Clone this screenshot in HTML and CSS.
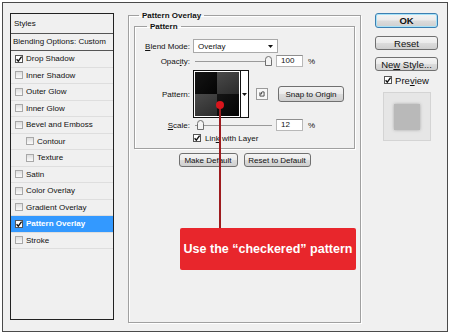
FILE: index.html
```html
<!DOCTYPE html>
<html lang="en">

<head>
    <title>Layer Style - Pattern Overlay</title>
    <link rel="stylesheet" href="styles.css">
</head>

<body>
    <div class="dialog">
        <!-- style list on the left -->
        <div class="styles-list">
            <div class="list-head">Styles</div>
            <div class="list-blend">Blending Options: Custom</div>
            <div class="list-row"><span class="check on"><svg viewBox="0 0 8 8"><path d="M1.6 4.2 L3.3 6.1 L6.6 1.6" /></svg></span>Drop Shadow</div>
            <div class="list-row"><span class="check"></span>Inner Shadow</div>
            <div class="list-row"><span class="check"></span>Outer Glow</div>
            <div class="list-row"><span class="check"></span>Inner Glow</div>
            <div class="list-row"><span class="check"></span>Bevel and Emboss</div>
            <div class="list-row sub"><span class="check"></span>Contour</div>
            <div class="list-row sub"><span class="check"></span>Texture</div>
            <div class="list-row"><span class="check"></span>Satin</div>
            <div class="list-row"><span class="check"></span>Color Overlay</div>
            <div class="list-row"><span class="check"></span>Gradient Overlay</div>
            <div class="list-row selected"><span class="check on"><svg viewBox="0 0 8 8"><path d="M1.6 4.2 L3.3 6.1 L6.6 1.6" /></svg></span>Pattern Overlay</div>
            <div class="list-row"><span class="check"></span>Stroke</div>
        </div>

        <!-- settings -->
        <fieldset class="group">
            <legend>Pattern Overlay</legend>
            <fieldset class="group inner">
                <legend>Pattern</legend>
                <div class="form-row row-blend">
                    <span class="field-label"><u>B</u>lend Mode:</span>
                    <div class="select">Overlay<svg class="caret" viewBox="0 0 5 3"><path d="M0 0 H5 L2.5 3 Z" /></svg></div>
                </div>
                <div class="form-row">
                    <span class="field-label">Opac<u>i</u>ty:</span>
                    <div class="slider"><svg class="thumb" style="margin-left: 70px" viewBox="0 0 7 10"><path d="M0.5 9.5 V3.5 Q0.5 0.5 3.5 0.5 Q6.5 0.5 6.5 3.5 V9.5 Z" /></svg></div>
                    <div class="num">100</div>
                    <span class="unit">%</span>
                </div>
                <div class="form-row row-pattern">
                    <span class="field-label">Pattern:</span>
                    <div class="swatch">
                        <div class="tile">
                            <span class="sq dark"></span><span class="sq grey"></span>
                            <span class="sq grey"></span><span class="sq dark"></span>
                        </div>
                        <div class="swatch-arrow"><svg class="caret" viewBox="0 0 5 3"><path d="M0 0 H5 L2.5 3 Z" /></svg></div>
                    </div>
                    <div class="icon-btn"><svg viewBox="0 0 12 12"><path d="M3.5 4 V8.5 H8.5 V3.5 H6 M5.5 3.5 V6 H3.5" /></svg></div>
                    <button class="btn btn-snap">Snap to Origin</button>
                </div>
                <div class="form-row">
                    <span class="field-label"><u>S</u>cale:</span>
                    <div class="slider"><svg class="thumb" style="margin-left: 2px" viewBox="0 0 7 10"><path d="M0.5 9.5 V3.5 Q0.5 0.5 3.5 0.5 Q6.5 0.5 6.5 3.5 V9.5 Z" /></svg></div>
                    <div class="num">12</div>
                    <span class="unit">%</span>
                </div>
                <div class="form-row row-link">
                    <span class="field-label"></span>
                    <span class="check on"><svg viewBox="0 0 8 8"><path d="M1.6 4.2 L3.3 6.1 L6.6 1.6" /></svg></span>
                    <span>Lin<u>k</u> with Layer</span>
                </div>
            </fieldset>
            <div class="defaults">
                <button class="btn btn-make">Make Default</button>
                <button class="btn btn-reset-def">Reset to Default</button>
            </div>
        </fieldset>

        <!-- buttons on the right -->
        <div class="side">
            <button class="btn side-btn btn-ok">OK</button>
            <button class="btn side-btn btn-reset">Reset</button>
            <button class="btn side-btn btn-new">Ne<u>w</u> Style...</button>
            <div class="preview-row">
                <span class="check on"><svg viewBox="0 0 8 8"><path d="M1.6 4.2 L3.3 6.1 L6.6 1.6" /></svg></span>
                <span>Pre<u>v</u>iew</span>
            </div>
            <div class="preview">
                <div class="preview-square"></div>
            </div>
        </div>

        <!-- tutorial annotation -->
        <div class="pointer-line"></div>
        <div class="pointer-dot"></div>
        <div class="callout">Use the “checkered” pattern</div>
    </div>
</body>

</html>
```

FILE: styles.css
```css
body {
    margin: 0;
    background: #fff;
    font-family: "Liberation Sans", Arial, sans-serif;
    font-size: 8px;
    color: #111;
}

/* dialog frame */
.dialog {
    position: relative;
    box-sizing: border-box;
    width: 446px;
    height: 330px;
    margin: 2px;
    padding: 8px 0 0 7px;
    display: flex;
    align-items: flex-start;
    border: 1px solid #4a4a4a;
    background: #f0f0f0;
}

/* left style list */
.styles-list {
    box-sizing: border-box;
    width: 104px;
    height: 307px;
    margin-top: 2px;
    border: 1px solid #222;
    background: #f0f0f0;
}

.list-head {
    height: 19px;
    line-height: 19px;
    padding-left: 3px;
    border-bottom: 1px solid #555;
}

.list-blend {
    height: 16px;
    line-height: 16px;
    padding-left: 2px;
    border-bottom: 1px solid #555;
}

.list-row {
    box-sizing: border-box;
    height: 16.5px;
    display: flex;
    align-items: center;
    padding-left: 4px;
    border-bottom: 1px solid #dedede;
}

.list-row.sub {
    padding-left: 15px;
}

.list-row.selected {
    background: #3399ff;
    color: #fff;
    font-weight: bold;
}

.check {
    box-sizing: border-box;
    width: 8px;
    height: 8px;
    margin-right: 3px;
    flex-shrink: 0;
    border: 1px solid #a8a8a8;
    background: linear-gradient(#dedede, #fafafa);
}

.check svg {
    display: block;
    width: 8px;
    height: 8px;
    margin: -1px;
}

.check svg path {
    fill: none;
    stroke: #111;
    stroke-width: 1.4;
}

.check.on {
    border-color: #555;
    background: #fff;
}

/* settings groups */
.group {
    box-sizing: border-box;
    width: 233px;
    height: 312px;
    min-width: 0;
    margin: 0 0 0 14px;
    padding: 2px 5px 0;
    border: 1px solid #a0a0a0;
    box-shadow: inset 1px 1px #fff, 1px 1px #fff;
}

.group legend {
    margin-left: 5px;
    padding: 0 3px;
    line-height: 9px;
    font-weight: bold;
}

.group.inner {
    width: 221px;
    height: 127px;
    margin: 0;
    padding: 7px 5px 0;
}

.group.inner legend {
    margin-left: 7px;
}

.form-row {
    display: flex;
    align-items: center;
    height: 14px;
}

.row-blend {
    height: 16px;
}

.row-pattern {
    height: 48px;
    margin-top: 2px;
}

.row-link {
    height: 12px;
}

.row-link .check {
    margin-right: 4px;
}

.field-label {
    width: 50px;
    margin-right: 3px;
    text-align: right;
    flex-shrink: 0;
}

.select {
    box-sizing: border-box;
    width: 85px;
    height: 14px;
    display: flex;
    align-items: center;
    justify-content: space-between;
    padding: 0 4px 0 4px;
    border: 1px solid #a9a9a9;
    background: #fff;
}

.caret {
    width: 5px;
    height: 3px;
}

.caret path {
    fill: #111;
}

.slider {
    width: 77px;
    height: 12px;
    margin-left: 2px;
    display: flex;
    align-items: center;
    background: linear-gradient(#9a9a9a, #9a9a9a) no-repeat center / 100% 1px;
}

.thumb {
    width: 7px;
    height: 10px;
}

.thumb path {
    fill: #f4f4f4;
    stroke: #6f6f6f;
}

.num {
    box-sizing: border-box;
    width: 27px;
    height: 12px;
    margin-left: 4px;
    padding-left: 4px;
    line-height: 10px;
    border: 1px solid #b8b8b8;
    border-top-color: #8e8e8e;
    background: #fff;
}

.unit {
    margin-left: 5px;
}

/* pattern picker */
.swatch {
    box-sizing: border-box;
    width: 56px;
    height: 48px;
    display: flex;
    border: 1px solid #111;
    background: #fff;
}

.tile {
    width: 44px;
    height: 44px;
    padding: 1px;
    display: grid;
    grid-template-columns: 22px 22px;
    grid-template-rows: 22px 22px;
}

.sq.dark {
    background: linear-gradient(135deg, #151515, #040404);
}

.sq.grey {
    background: linear-gradient(150deg, #4a4a4a, #2b2b2b);
}

.swatch-arrow {
    width: 7px;
    display: flex;
    align-items: center;
    justify-content: center;
    border-left: 1px solid #111;
}

.icon-btn {
    box-sizing: border-box;
    width: 12px;
    height: 12px;
    margin-left: 7px;
    border: 1px solid #9a9a9a;
    background: #f8f8f8;
}

.icon-btn svg {
    display: block;
    width: 10px;
    height: 10px;
}

.icon-btn path {
    fill: none;
    stroke: #333;
    stroke-width: 1;
}

/* buttons */
.btn {
    box-sizing: border-box;
    height: 14px;
    padding: 0;
    border: 1px solid #707070;
    border-radius: 3px;
    background: linear-gradient(#f4f4f4 0%, #ebebeb 48%, #dcdcdc 52%, #cfcfcf 100%);
    font-family: "Liberation Sans", Arial, sans-serif;
    font-size: 8px;
    color: #111;
}

.btn-snap {
    width: 66px;
    height: 16px;
    margin-left: 10px;
}

.defaults {
    display: flex;
    justify-content: center;
    gap: 6px;
    margin-top: 4px;
}

.btn-make {
    width: 59px;
}

.btn-reset-def {
    width: 67px;
}

/* right column */
.side {
    width: 63px;
    margin: 2px 0 0 14px;
    display: flex;
    flex-direction: column;
    font-size: 9.5px;
}

.side-btn {
    width: 63px;
    font-size: 9.5px;
}

.btn-ok {
    height: 15px;
    border-color: #3c7fb1;
    box-shadow: inset 0 0 0 1px #a6e2f8;
    font-weight: bold;
}

.btn-reset {
    margin-top: 8px;
}

.btn-new {
    margin-top: 7px;
}

.preview-row {
    height: 10px;
    margin-top: 4px;
    display: flex;
    align-items: center;
    justify-content: center;
}

.preview {
    box-sizing: border-box;
    width: 48px;
    height: 49px;
    margin: 7px auto 0;
    display: flex;
    align-items: center;
    justify-content: center;
    border: 1px solid #d4d4d4;
    background: #e6e6e6;
}

.preview-square {
    width: 26px;
    height: 26px;
    background: #b9b9b9;
    box-shadow: 0 0 3px #a8a8a8;
}

/* red annotation */
.pointer-line {
    position: absolute;
    left: 216px;
    top: 102px;
    width: 2px;
    height: 123px;
    background: #9e1b1e;
}

.pointer-dot {
    position: absolute;
    left: 213px;
    top: 98px;
    width: 8px;
    height: 8px;
    border-radius: 50%;
    background: #d9151c;
}

.callout {
    position: absolute;
    left: 177px;
    top: 225px;
    width: 176px;
    height: 42px;
    display: flex;
    align-items: center;
    justify-content: center;
    border-radius: 2px;
    background: #e8262c;
    color: #fff;
    font-size: 12.5px;
    font-weight: bold;
}
```
